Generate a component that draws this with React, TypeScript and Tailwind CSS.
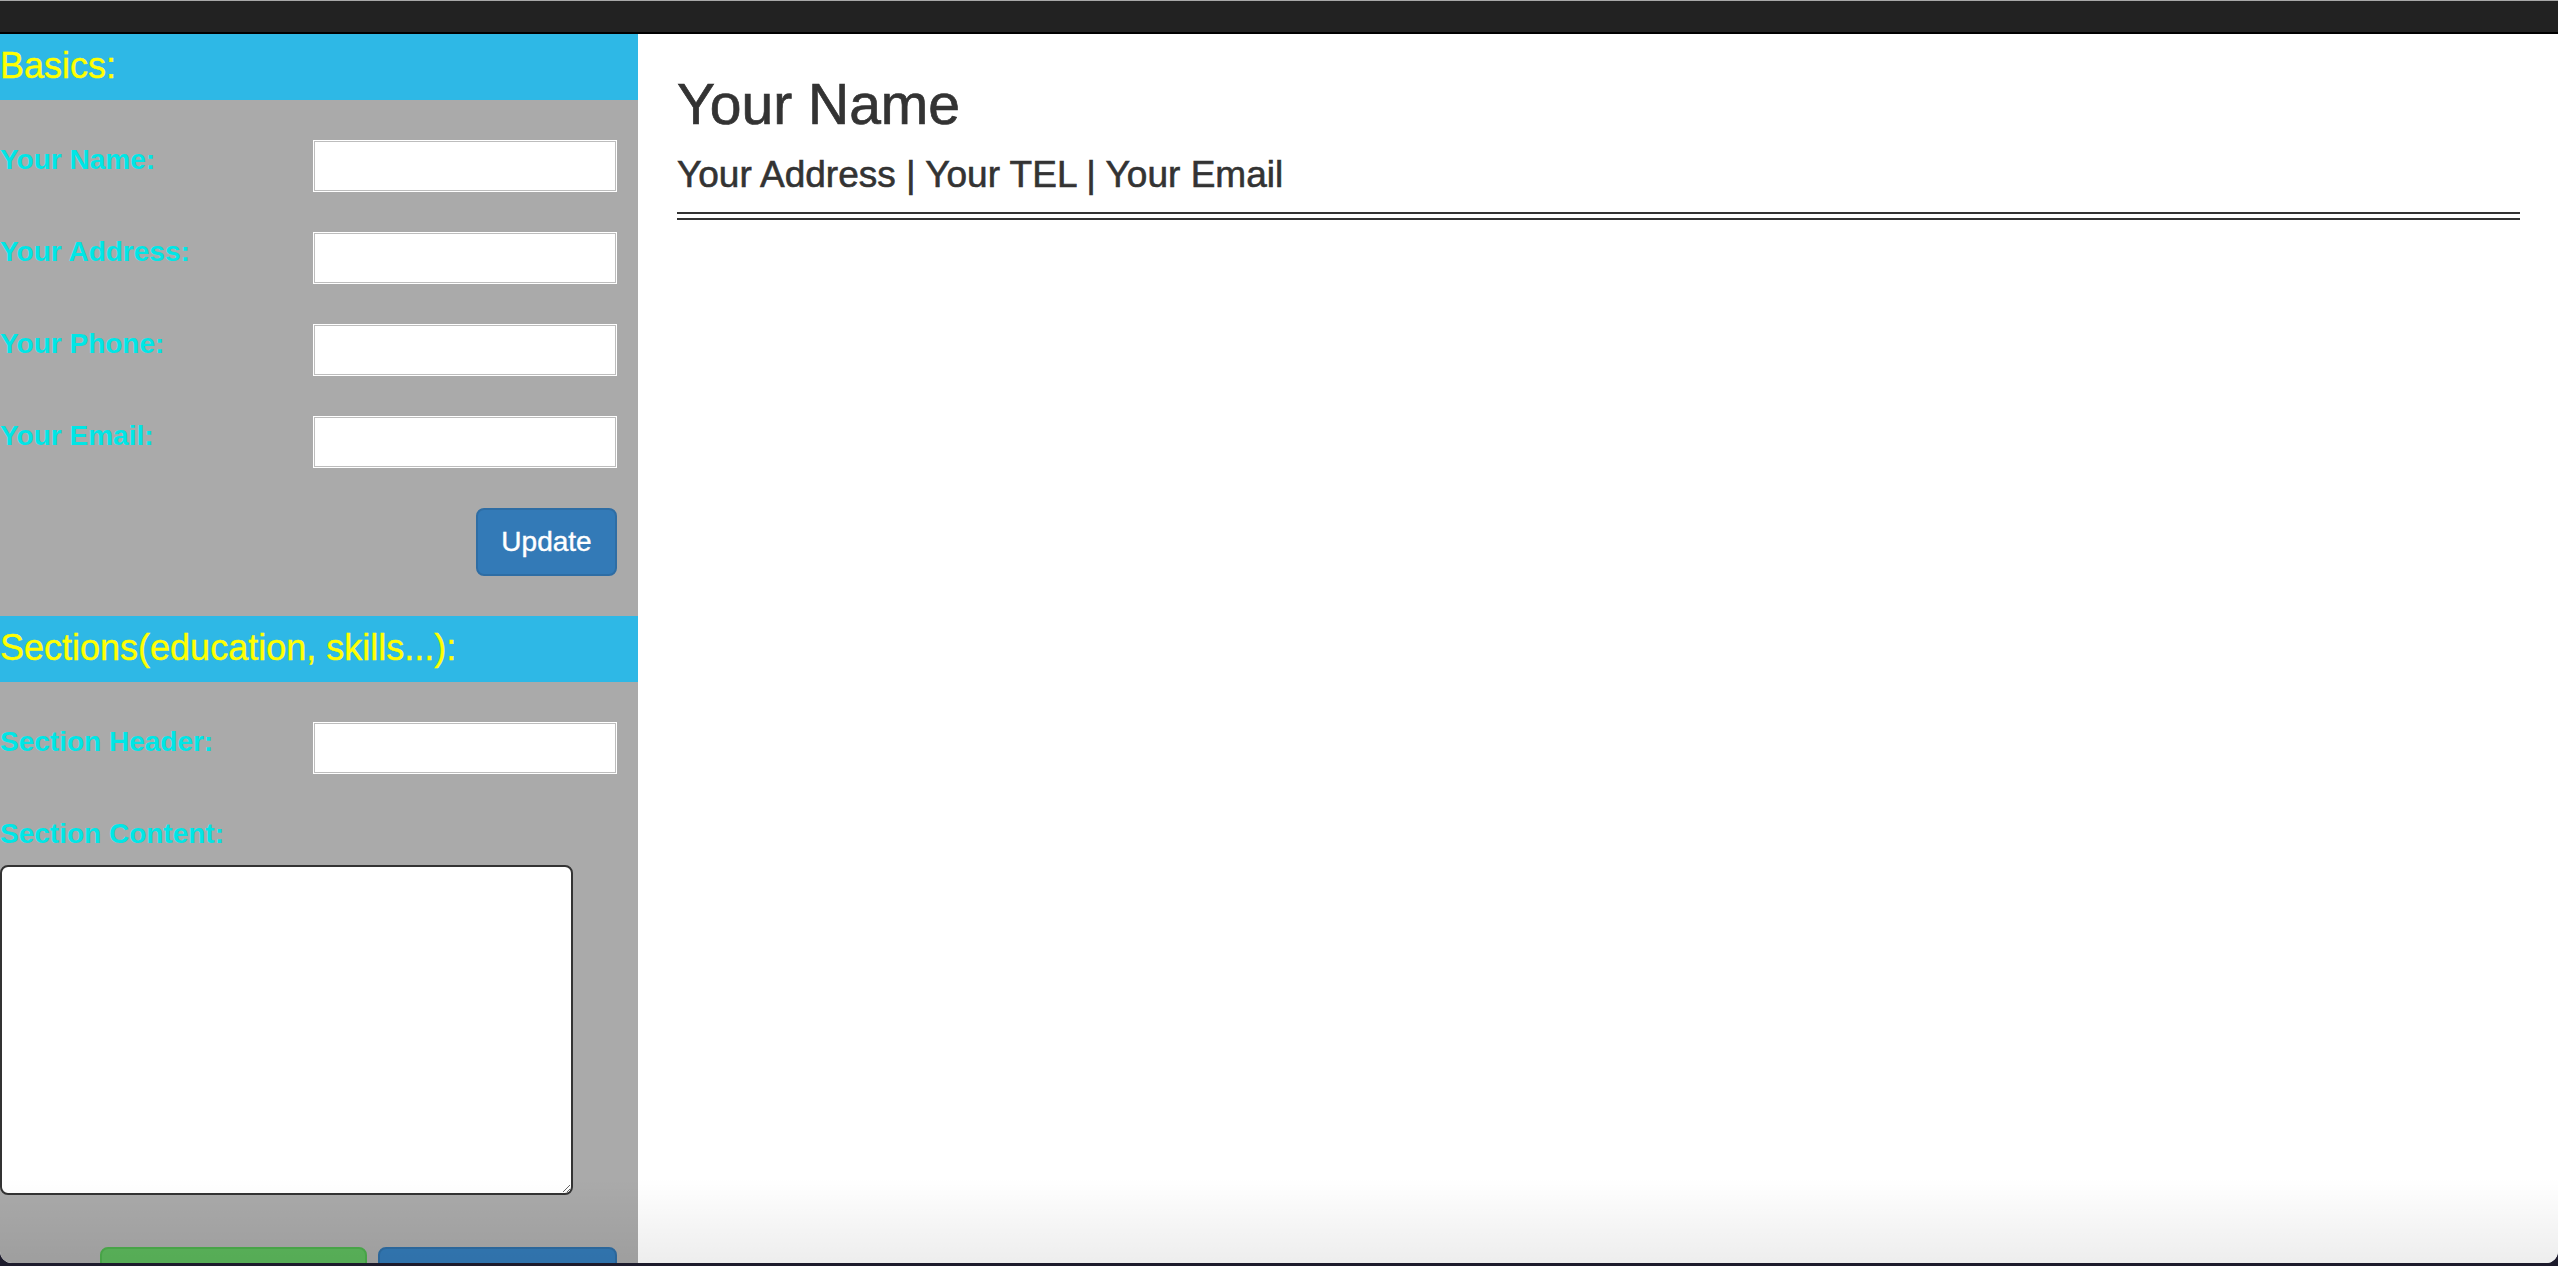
import React from "react";

const font = { fontFamily: '"Liberation Sans", Arial, Helvetica, sans-serif' };

function Field({ label }: { label: string }) {
  return (
    <div className="flex items-start">
      <label className="w-[313px] text-[28px] leading-[40px] font-bold text-[#00e6e6]">{label}</label>
      <input
        type="text"
        className="m-[1px] w-[302px] h-[50px] bg-white border border-[#bdbdbd] shadow-[0_0_0_1px_#ffffff] outline-none"
      />
    </div>
  );
}

function SectionHeader({ title }: { title: string }) {
  return (
    <div className="h-[66px] bg-[#2eb8e6] pt-[12px] text-[36px] leading-[40px] text-[#ffff00] whitespace-nowrap [-webkit-text-stroke:0.4px_#ffff00]">
      {title}
    </div>
  );
}

export default function App() {
  return (
    <div className="w-[2558px] h-[1266px] bg-[#1d1b2c] overflow-hidden" style={font}>
      <div className="relative h-[1263px] bg-white rounded-b-[12px] overflow-hidden flex flex-col">
        <div className="h-[34px] shrink-0 border-t border-t-[#a8a8a8] bg-[#222222] border-b-2 border-b-black" />
        <div className="flex flex-1 min-h-0">
          <aside className="w-[638px] shrink-0 bg-[#aaaaaa] pr-[21px] flex flex-col">
            <div className="-mr-[21px]">
              <SectionHeader title="Basics:" />
            </div>
            <div className="mt-[40px] flex flex-col gap-[40px]">
              <Field label="Your Name:" />
              <Field label="Your Address:" />
              <Field label="Your Phone:" />
              <Field label="Your Email:" />
              <div className="flex justify-end">
                <button className="w-[141px] h-[68px] rounded-[8px] bg-[#337ab7] border-2 border-[#2e6da4] text-white text-[28px] leading-[40px] [-webkit-text-stroke:0.4px_#ffffff]">
                  Update
                </button>
              </div>
            </div>
            <div className="mt-[40px] -mr-[21px]">
              <SectionHeader title="Sections(education, skills...):" />
            </div>
            <div className="mt-[40px]">
              <Field label="Section Header:" />
            </div>
            <label className="mt-[40px] text-[28px] leading-[40px] font-bold text-[#00e6e6]">Section Content:</label>
            <textarea className="mt-[11px] w-[573px] h-[330px] shrink-0 bg-white border-2 border-[#333333] rounded-[8px] outline-none resize" />
            <div className="mt-[52px] flex justify-end gap-[11px]">
              <button className="w-[267px] h-[68px] shrink-0 rounded-[8px] bg-[#5cb85c] border-2 border-[#4cae4c]" />
              <button className="w-[239px] h-[68px] shrink-0 rounded-[8px] bg-[#337ab7] border-2 border-[#2e6da4]" />
            </div>
          </aside>
          <main className="flex-1 bg-white pl-[39px] pr-[38px] pt-[39px] text-[#333333]">
            <h1 className="text-[57px] leading-[62px] font-normal [-webkit-text-stroke:0.7px_#333333]">Your Name</h1>
            <h4 className="mt-[20px] text-[37px] leading-[40px] font-normal [-webkit-text-stroke:0.6px_#333333]">Your Address | Your TEL | Your Email</h4>
            <div className="mt-[17px] h-[8px] border-t-2 border-b-2 border-[#333333]" />
          </main>
        </div>
        <div className="pointer-events-none absolute left-0 right-0 bottom-0 h-[85px] bg-gradient-to-b from-transparent to-black/[0.07]" />
      </div>
    </div>
  );
}
